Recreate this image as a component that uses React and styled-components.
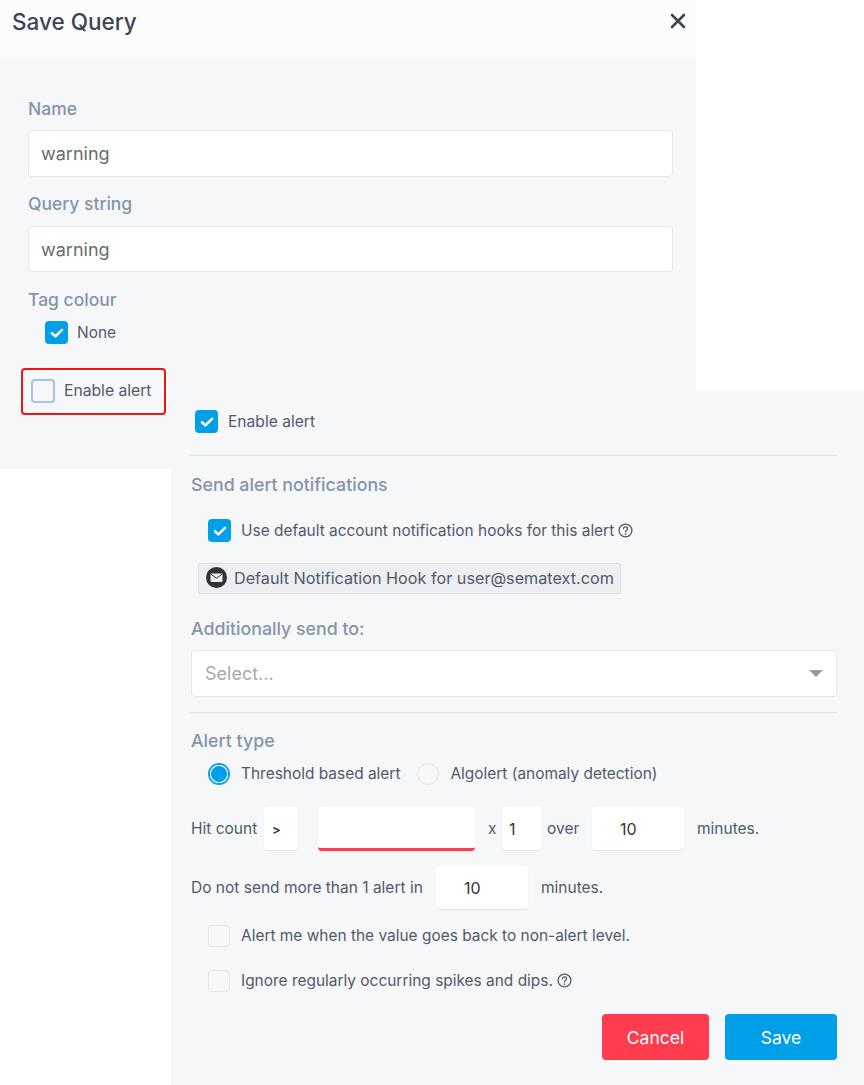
import React from 'react'
import styled, { createGlobalStyle } from 'styled-components'

const GlobalStyle = createGlobalStyle`
  html, body {
    margin: 0;
    padding: 0;
    background: #fff;
  }
  body {
    font-family: Inter, "Liberation Sans", sans-serif;
    color: #4f5a6b;
  }
`

const Page = styled.div`
  width: 864px;
  height: 1085px;
  overflow: hidden;
`

const SavePanel = styled.section`
  width: 696px;
  height: 469px;
  background: #f6f7f9;
`

const PanelHeader = styled.header`
  height: 58px;
  background: #fcfcfd;
  display: flex;
  justify-content: space-between;
  padding: 0 10px 0 12px;
  box-sizing: border-box;
`

const Title = styled.h1`
  margin: 7px 0 0;
  font-size: 22.5px;
  line-height: 30px;
  font-weight: 500;
  color: #3a4557;
`

const CloseButton = styled.button`
  margin: 13px 0 0;
  padding: 0;
  border: 0;
  width: 16px;
  height: 16px;
  background: none;
  display: block;
`

const PanelBody = styled.div`
  padding: 39px 23px 0 28px;
`

const FieldLabel = styled.div`
  font-size: ${({ $size }) => $size || 17.5}px;
  line-height: 24px;
  font-weight: 500;
  color: #8494a9;
  margin-top: ${({ $top }) => $top || 0}px;
`

const TextBox = styled.div`
  height: ${({ $height }) => $height || 47}px;
  box-sizing: border-box;
  margin-top: ${({ $top }) => $top || 0}px;
  padding: 0 12px;
  padding-left: ${({ $placeholder }) => ($placeholder ? 13 : 12)}px;
  display: flex;
  align-items: center;
  justify-content: space-between;
  background: #fff;
  border: 1px solid #e4e7ee;
  border-radius: 4px;
  font-size: 18px;
  color: ${({ $placeholder }) => ($placeholder ? '#a9a9a9' : '#6b6b6b')};
`

const CheckRow = styled.label`
  display: flex;
  align-items: center;
  gap: ${({ $gap }) => $gap || 10}px;
  font-size: ${({ $size }) => $size || 15.45}px;
  line-height: 24px;
  color: #4f5a6b;
  margin-left: ${({ $left }) => $left || 0}px;
  margin-top: ${({ $top }) => $top || 0}px;
  height: ${({ $height }) => $height || 23}px;
`

const LabelText = styled.span`
  display: inline-flex;
  align-items: center;
  white-space: nowrap;
`

const Box = styled.span`
  width: ${({ $size }) => $size || 22}px;
  height: ${({ $size }) => $size || 22}px;
  flex: none;
  box-sizing: border-box;
  border-radius: 4px;
  display: flex;
  align-items: center;
  justify-content: center;
  background: ${({ $checked }) => ($checked ? '#00a0e8' : '#f6f7f9')};
  border: ${({ $checked, $focus }) =>
    $checked ? '0' : $focus ? '2px solid #a6c4e6' : '1px solid #e2e5ec'};
`

const AlertFrame = styled.div`
  width: 145px;
  height: 47px;
  box-sizing: border-box;
  margin: 24px 0 0 -7px;
  padding: 0 0 2px 8px;
  display: flex;
  align-items: center;
  border: 2px solid #f01414;
  border-radius: 4px;
`

const AlertPanel = styled.section`
  width: 693px;
  height: 695px;
  margin: -79px 0 0 171px;
  box-sizing: border-box;
  background: #f6f7f9;
  padding: 20px 27px 0 20px;
`

const Divider = styled.hr`
  margin: ${({ $top }) => $top || 0}px 0 0;
  border: 0;
  height: 1px;
  background: #dfe1e6;
`

const HookTag = styled.div`
  width: 423px;
  height: 31px;
  box-sizing: border-box;
  margin: 21px 0 0 7px;
  padding: 0 0 2px 7px;
  display: flex;
  align-items: center;
  gap: 7px;
  background: #eceef1;
  border: 1px solid #d9dde6;
  border-radius: 2px;
  font-size: 16.2px;
  color: #4f5a6b;
  white-space: nowrap;
`

const Caret = styled.span`
  width: 0;
  height: 0;
  margin-right: 1px;
  border-left: 7px solid transparent;
  border-right: 7px solid transparent;
  border-top: 7px solid #999;
`

const RadioRow = styled.div`
  display: flex;
  align-items: center;
  margin: 9px 0 0 17px;
  height: 23px;
`

const Radio = styled.span`
  width: 22px;
  height: 22px;
  flex: none;
  box-sizing: border-box;
  border-radius: 50%;
  background: ${({ $checked }) =>
    $checked ? 'radial-gradient(circle, #00a0e8 0 7.5px, #f6f7f9 8.5px 9px, #00a0e8 9.5px)' : '#f6f7f9'};
  border: ${({ $checked }) => ($checked ? '0' : '1px solid #e2e5ec')};
`

const RadioLabel = styled.span`
  font-size: 15.45px;
  margin: 0 17px 0 11px;
  white-space: nowrap;
`

const InlineRow = styled.div`
  display: flex;
  align-items: center;
  height: 43px;
  margin-top: ${({ $top }) => $top || 0}px;
  font-size: 15.5px;
  white-space: nowrap;
  color: #4f5a6b;
`

const Word = styled.span`
  width: ${({ $width }) => $width}px;
  padding-left: ${({ $pad }) => $pad || 0}px;
  box-sizing: border-box;
  flex: none;
`

const NumberBox = styled.div`
  width: ${({ $width }) => $width}px;
  height: 43px;
  box-sizing: border-box;
  flex: none;
  padding-left: ${({ $pad }) => $pad}px;
  display: flex;
  align-items: center;
  background: #fff;
  border-radius: 4px;
  box-shadow: 0 1px 1px rgba(40, 50, 70, 0.1);
  font-size: ${({ $size }) => $size || 16}px;
  font-weight: ${({ $weight }) => $weight || 400};
  color: #333;
`

const ErrorBox = styled(NumberBox)`
  height: 44px;
  border-bottom: 3px solid #ff3d4f;
`

const Actions = styled.div`
  display: flex;
  justify-content: flex-end;
  gap: 16px;
  margin: 22px 0 0;
`

const ActionButton = styled.button`
  width: ${({ $width }) => $width}px;
  height: 46px;
  border: 0;
  border-radius: 4px;
  background: ${({ $color }) => $color};
  color: #fff;
  font-family: inherit;
  font-size: 17.5px;
`

const HelpIcon = styled.svg`
  width: 15px;
  height: 15px;
  margin-left: 4px;
  flex: none;
`

const Tick = () => (
  <svg width="14" height="12" viewBox="0 0 14 12" fill="none">
    <path d="M2 6.2 5.4 9.4 12 2.8" stroke="#fff" strokeWidth="2.6" strokeLinecap="round" strokeLinejoin="round" />
  </svg>
)

const Help = () => (
  <HelpIcon viewBox="0 0 14 14" fill="none">
    <circle cx="7" cy="7" r="6" stroke="#4f5a6b" strokeWidth="1.2" />
    <path d="M5.1 5.4C5.2 4.3 6 3.7 7 3.7c1.1 0 1.9.7 1.9 1.6 0 1.4-1.9 1.5-1.9 3" stroke="#4f5a6b" strokeWidth="1.2" strokeLinecap="round" />
    <circle cx="7" cy="10.3" r="0.8" fill="#4f5a6b" />
  </HelpIcon>
)

const MailBadge = () => (
  <svg width="21" height="21" viewBox="0 0 21 21">
    <circle cx="10.5" cy="10.5" r="10.5" fill="#333" />
    <rect x="4.5" y="6.5" width="12" height="8.5" rx="1" fill="#f2f2f2" />
    <path d="M4.8 7 10.5 11.2 16.2 7" fill="none" stroke="#333" strokeWidth="1" />
  </svg>
)

const App = () => (
  <Page>
    <GlobalStyle />
    <SavePanel>
      <PanelHeader>
        <Title>Save Query</Title>
        <CloseButton aria-label="Close">
          <svg width="16" height="16" viewBox="0 0 16 16">
            <path d="M2 2 14 14M14 2 2 14" stroke="#3a4557" strokeWidth="2.6" strokeLinecap="round" />
          </svg>
        </CloseButton>
      </PanelHeader>
      <PanelBody>
        <FieldLabel>Name</FieldLabel>
        <TextBox $top={9}>warning</TextBox>
        <FieldLabel $top={15}>Query string</FieldLabel>
        <TextBox $top={10} $height={46}>warning</TextBox>
        <FieldLabel $top={16}>Tag colour</FieldLabel>
        <CheckRow $left={17} $top={9} $gap={9}>
          <Box $checked $size={23}><Tick /></Box>
          None
        </CheckRow>
        <AlertFrame>
          <CheckRow $gap={9} $size={15.7}>
            <Box $size={24} $focus />
            Enable alert
          </CheckRow>
        </AlertFrame>
      </PanelBody>
    </SavePanel>

    <AlertPanel>
      <CheckRow $left={4} $size={15.6}>
        <Box $checked $size={23}><Tick /></Box>
        Enable alert
      </CheckRow>
      <Divider $top={22} />
      <FieldLabel $top={17} $size={17.8}>Send alert notifications</FieldLabel>
      <CheckRow $left={17} $top={22}>
        <Box $checked $size={23}><Tick /></Box>
        <LabelText>
          Use default account notification hooks for this alert
          <Help />
        </LabelText>
      </CheckRow>
      <HookTag>
        <MailBadge />
        Default Notification Hook for user@sematext.com
      </HookTag>
      <FieldLabel $top={23} $size={17.8}>Additionally send to:</FieldLabel>
      <TextBox $top={9} $placeholder>
        Select...
        <Caret />
      </TextBox>
      <Divider $top={15} />
      <FieldLabel $top={16} $size={17.8}>Alert type</FieldLabel>
      <RadioRow>
        <Radio $checked />
        <RadioLabel>Threshold based alert</RadioLabel>
        <Radio />
        <RadioLabel>Algolert (anomaly detection)</RadioLabel>
      </RadioRow>
      <InlineRow $top={22}>
        <Word $width={73}>Hit count</Word>
        <NumberBox $width={34} $pad={8} $size={13} $weight={600}>&gt;</NumberBox>
        <Word $width={20} />
        <ErrorBox $width={157} />
        <Word $width={27} $pad={13}>x</Word>
        <NumberBox $width={39} $pad={7}>1</NumberBox>
        <Word $width={51} $pad={6}>over</Word>
        <NumberBox $width={92} $pad={28}>10</NumberBox>
        <Word $width={80} $pad={13}>minutes.</Word>
      </InlineRow>
      <InlineRow $top={16}>
        <Word $width={245}>Do not send more than 1 alert in</Word>
        <NumberBox $width={92} $pad={28}>10</NumberBox>
        <Word $width={80} $pad={13}>minutes.</Word>
      </InlineRow>
      <CheckRow $left={17} $top={15} $gap={11}>
        <Box />
        Alert me when the value goes back to non-alert level.
      </CheckRow>
      <CheckRow $left={17} $top={22} $gap={11}>
        <Box />
        <LabelText>
          Ignore regularly occurring spikes and dips.
          <Help />
        </LabelText>
      </CheckRow>
      <Actions>
        <ActionButton $width={107} $color="#ff3d4f">Cancel</ActionButton>
        <ActionButton $width={112} $color="#00a0e8">Save</ActionButton>
      </Actions>
    </AlertPanel>
  </Page>
)

export default App
